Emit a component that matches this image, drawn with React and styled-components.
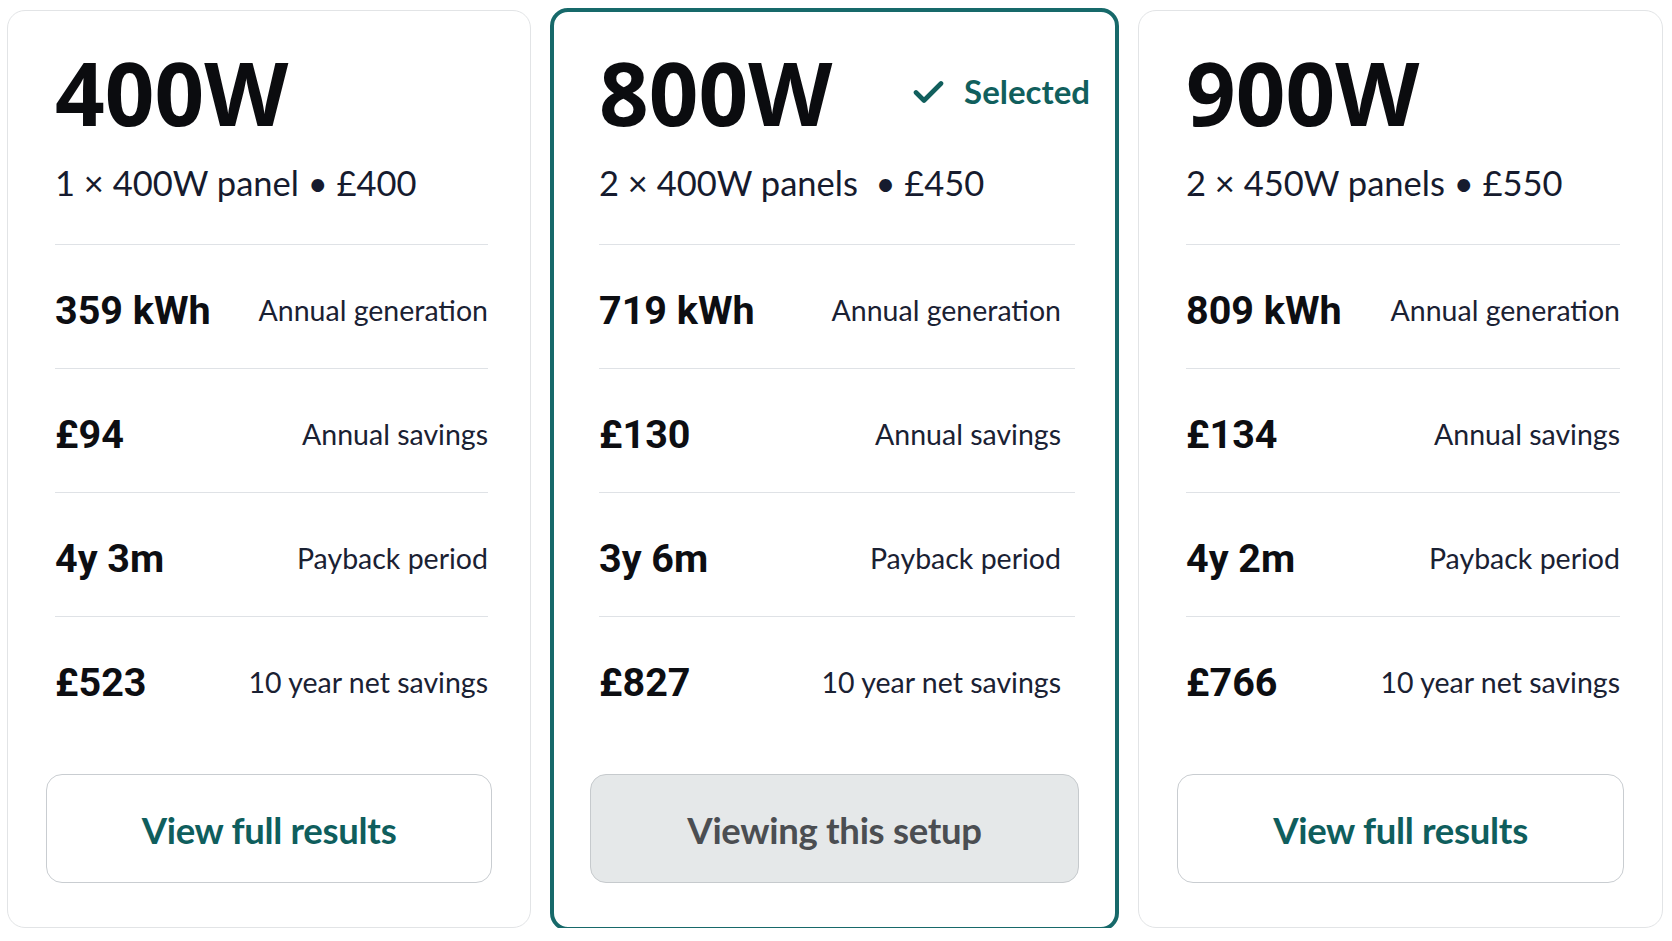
import React from "react";
import styled, { createGlobalStyle } from "styled-components";

const GlobalStyle = createGlobalStyle`
  * { box-sizing: border-box; }
  html, body { margin: 0; padding: 0; background: #ffffff; }
  body {
    font-family: "Lato", "Noto Sans", sans-serif;
    -webkit-font-smoothing: antialiased;
  }
`;

const Page = styled.main`
  padding: 10px 9px 0 7px;
`;

const Grid = styled.div`
  display: grid;
  grid-template-columns: 524px 569px 525px;
  column-gap: 19px;
  height: 918px;
  align-items: stretch;
`;

const Card = styled.section`
  display: flex;
  flex-direction: column;
  background: #ffffff;
  border: ${(p) => (p.$selected ? "4px solid #17696a" : "1.5px solid #e2e4e6")};
  border-radius: 18px;
  padding: ${(p) => (p.$selected ? "37px 36px 44px 36px" : "38px 38px 44px 38px")};
  margin: ${(p) => (p.$selected ? "-2px 0 -3px" : "0")};
`;

const Body = styled.div`
  display: flex;
  flex-direction: column;
  padding: 0 4px 0 9px;
`;

const Header = styled.header`
  display: flex;
  align-items: center;
  justify-content: space-between;
`;

const Power = styled.h2`
  margin: 0;
  font-family: "Noto Sans", "Open Sans", sans-serif;
  font-weight: 700;
  font-size: 87px;
  line-height: 1;
  color: #0b0c0f;
`;

const Badge = styled.div`
  display: flex;
  align-items: center;
  gap: 20px;
  margin-right: -15px;
  margin-bottom: 1px;
  font-family: "Lato", sans-serif;
  font-weight: 700;
  font-size: 33px;
  line-height: 1.2;
  color: #115f5d;
`;

const Subtitle = styled.p`
  margin: 26px 0 0;
  font-family: "Lato", sans-serif;
  font-weight: 400;
  font-size: 34.5px;
  line-height: 1.2;
  color: #161b2e;
  white-space: pre;
`;

const StatList = styled.dl`
  margin: 41px 0 0;
  display: flex;
  flex-direction: column;
`;

const Row = styled.div`
  display: flex;
  align-items: center;
  justify-content: space-between;
  height: 124px;
  padding: 7px ${(p) => (p.$inset ? "14px" : "0")} 0 0;
  border-top: 1.5px solid #dfe2e6;
`;

const Value = styled.dt`
  margin: 0;
  font-family: "Roboto", "Liberation Sans", sans-serif;
  font-weight: 700;
  font-size: 39.5px;
  line-height: 1;
  color: #0d0e12;
`;

const Label = styled.dd`
  margin: 0;
  font-family: "Lato", sans-serif;
  font-weight: 400;
  font-size: 28.5px;
  line-height: 1.2;
  color: #1a2133;
`;

const Action = styled.button`
  margin-top: auto;
  height: 109px;
  width: 100%;
  border-radius: 16px;
  border: 1.5px solid ${(p) => (p.$current ? "#c6cacd" : "#c9cdd1")};
  background: ${(p) => (p.$current ? "#e5e8e9" : "#ffffff")};
  color: ${(p) => (p.$current ? "#4b4e52" : "#0f5e5d")};
  font-family: "Lato", sans-serif;
  font-weight: 700;
  font-size: 36.5px;
  letter-spacing: -0.3px;
  line-height: 1;
  padding-top: 4px;
  cursor: ${(p) => (p.$current ? "default" : "pointer")};
`;

const CheckIcon = () => (
  <svg width="31" height="24" viewBox="0 0 31 24" aria-hidden="true">
    <polyline
      points="3,12.5 11,20.5 28,3.5"
      fill="none"
      stroke="#115f5d"
      strokeWidth="4.6"
      strokeLinecap="round"
      strokeLinejoin="round"
    />
  </svg>
);

const setups = [
  {
    power: "400W",
    desc: "1 × 400W panel • £400",
    stats: [
      ["359 kWh", "Annual generation"],
      ["£94", "Annual savings"],
      ["4y 3m", "Payback period"],
      ["£523", "10 year net savings"],
    ],
  },
  {
    power: "800W",
    desc: "2 × 400W panels  • £450",
    selected: true,
    stats: [
      ["719 kWh", "Annual generation"],
      ["£130", "Annual savings"],
      ["3y 6m", "Payback period"],
      ["£827", "10 year net savings"],
    ],
  },
  {
    power: "900W",
    desc: "2 × 450W panels • £550",
    stats: [
      ["809 kWh", "Annual generation"],
      ["£134", "Annual savings"],
      ["4y 2m", "Payback period"],
      ["£766", "10 year net savings"],
    ],
  },
];

export default function App() {
  return (
    <>
      <GlobalStyle />
      <Page>
        <Grid>
          {setups.map((s) => (
            <Card key={s.power} $selected={s.selected}>
              <Body>
                <Header>
                  <Power>{s.power}</Power>
                  {s.selected && (
                    <Badge>
                      <CheckIcon />
                      Selected
                    </Badge>
                  )}
                </Header>
                <Subtitle>{s.desc}</Subtitle>
                <StatList>
                  {s.stats.map(([v, l]) => (
                    <Row key={l} $inset={s.selected}>
                      <Value>{v}</Value>
                      <Label>{l}</Label>
                    </Row>
                  ))}
                </StatList>
              </Body>
              <Action $current={s.selected}>
                {s.selected ? "Viewing this setup" : "View full results"}
              </Action>
            </Card>
          ))}
        </Grid>
      </Page>
    </>
  );
}
